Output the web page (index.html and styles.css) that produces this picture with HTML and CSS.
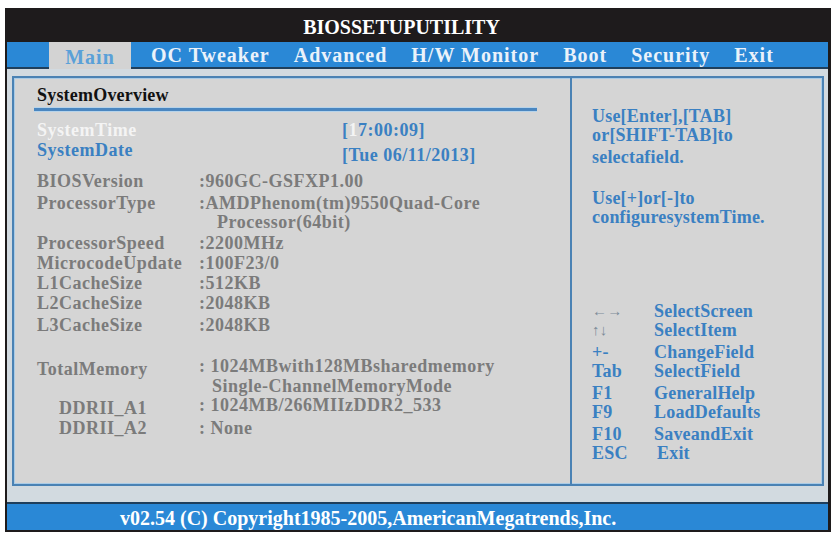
FILE: index.html
```html
<!DOCTYPE html>
<html lang="en">
<head>
    <meta charset="UTF-8">
    <title>BIOS Setup Utility</title>
    <link rel="stylesheet" href="styles.css">
</head>
<body>
    <div class="screen">
        <!-- Title bar -->
        <div class="title">BIOSSETUPUTILITY</div>

        <!-- Menu tabs -->
        <nav class="tabs">
            <span class="tab-stub"></span>
            <span class="tab active">Main</span>
            <span class="tab first">OC Tweaker</span>
            <span class="tab">Advanced</span>
            <span class="tab">H/W Monitor</span>
            <span class="tab">Boot</span>
            <span class="tab">Security</span>
            <span class="tab">Exit</span>
        </nav>

        <div class="body">
            <div class="panel">
                <!-- Left: system overview -->
                <section class="overview">
                    <h2 class="heading">SystemOverview</h2>
                    <div class="rule"></div>

                    <div class="row r-time">
                        <span class="label sel">SystemTime</span>
                        <span class="spacer"></span>
                        <span class="edit">[<span class="cursor">1</span>7:00:09]</span>
                    </div>
                    <div class="row r-date">
                        <span class="label edit">SystemDate</span>
                        <span class="spacer"></span>
                        <span class="edit down">[Tue 06/11/2013]</span>
                    </div>

                    <div class="row r-bios">
                        <span class="label">BIOSVersion</span>
                        <span class="value">:960GC-GSFXP1.00</span>
                    </div>
                    <div class="row r-cpu">
                        <span class="label">ProcessorType</span>
                        <span class="value">:AMDPhenom(tm)9550Quad-Core<br><span class="cont">Processor(64bit)</span></span>
                    </div>
                    <div class="row r-speed">
                        <span class="label">ProcessorSpeed</span>
                        <span class="value">:2200MHz</span>
                    </div>
                    <div class="row">
                        <span class="label">MicrocodeUpdate</span>
                        <span class="value">:100F23/0</span>
                    </div>
                    <div class="row r-l1">
                        <span class="label">L1CacheSize</span>
                        <span class="value">:512KB</span>
                    </div>
                    <div class="row">
                        <span class="label">L2CacheSize</span>
                        <span class="value">:2048KB</span>
                    </div>
                    <div class="row r-l3">
                        <span class="label">L3CacheSize</span>
                        <span class="value">:2048KB</span>
                    </div>

                    <div class="row r-mem">
                        <span class="label lower">TotalMemory</span>
                        <span class="value">: 1024MBwith128MBsharedmemory<br><span class="cont2">Single-ChannelMemoryMode</span></span>
                    </div>
                    <div class="row r-dimm">
                        <span class="label indent lower">DDRII_A1</span>
                        <span class="value">: 1024MB/266MIIzDDR2_533</span>
                    </div>
                    <div class="row r-dimm2">
                        <span class="label indent">DDRII_A2</span>
                        <span class="value">: None</span>
                    </div>
                </section>

                <!-- Right: help and key legend -->
                <aside class="help">
                    <p class="hint">Use[Enter],[TAB]<br>or[SHIFT-TAB]to<br><span class="gap">selectafield.</span></p>
                    <p class="hint second">Use[+]or[-]to<br>configuresystemTime.</p>

                    <div class="keys">
                        <span class="key arrow">&larr;&rarr;</span><span class="act">SelectScreen</span>
                        <span class="key arrow">&uarr;&darr;</span><span class="act">SelectItem</span>
                        <span class="key k-gap">+-</span><span class="act k-gap">ChangeField</span>
                        <span class="key">Tab</span><span class="act">SelectField</span>
                        <span class="key k-gap">F1</span><span class="act k-gap">GeneralHelp</span>
                        <span class="key">F9</span><span class="act">LoadDefaults</span>
                        <span class="key k-gap">F10</span><span class="act k-gap">SaveandExit</span>
                        <span class="key">ESC</span><span class="act nudge">Exit</span>
                    </div>
                </aside>
            </div>
        </div>

        <footer class="footer">v02.54 (C) Copyright1985-2005,AmericanMegatrends,Inc.</footer>
    </div>
</body>
</html>
```

FILE: styles.css
```css
/* General Reset */
* {
    margin: 0;
    padding: 0;
    box-sizing: border-box;
}

body {
    background: #FFFFFF;
    font-family: "Liberation Serif", "Times New Roman", serif;
    font-weight: bold;
    padding: 8px 5px 2px 5px;
}

/* Outer frame */
.screen {
    width: 826px;
    height: 524px;
    border-left: 2px solid #1E1B1C;
    border-right: 3px solid #1E1B1C;
    border-bottom: 2px solid #1E1B1C;
    display: flex;
    flex-direction: column;
    background: #D2DAE0;
}

/* Title */
.title {
    height: 34px;
    background: #1E1B1C;
    color: #FFFFFF;
    font-size: 20px;
    text-align: center;
    line-height: 38px;
    padding-right: 32px;
}

/* Tabs */
.tabs {
    height: 27px;
    background: #2A88D6;
    border-bottom: 2px solid #1F3F5C;
    display: flex;
    align-items: stretch;
    color: #EAF2FA;
    font-size: 20px;
    letter-spacing: 1px;
    line-height: 26px;
}

.tab-stub {
    width: 42px;
}

.tab {
    padding: 0 12px;
}

.tab.first {
    margin-left: 8px;
}

.tab.active {
    width: 82px;
    padding: 0;
    text-align: center;
    background: #D3D3D3;
    color: #5AA0D8;
    margin-bottom: -2px;
    line-height: 30px;
}

/* Content area */
.body {
    flex: 1;
    padding: 7px 4px 16px 5px;
    border-bottom: 2px solid #1F3F5C;
}

.panel {
    height: 100%;
    border: 2px solid #4A82B4;
    box-shadow: inset 0 0 0 1px #A9CBE6;
    background: #D5D5D5;
    display: flex;
}

.overview {
    width: 558px;
    padding: 6px 0 0 23px;
    border-right: 2px solid #4A82B4;
    color: #7B7B7B;
    font-size: 18px;
    letter-spacing: 0.5px;
}

.heading {
    font-size: 18px;
    color: #111111;
    line-height: 22px;
    letter-spacing: 0.2px;
}

.rule {
    width: 503px;
    height: 5px;
    margin: 1px 0 0 -3px;
    border-top: 1px solid #B6D3EA;
    border-bottom: 1px solid #B6D3EA;
    background: #4A86C0;
}

.row {
    display: flex;
    line-height: 20px;
}

.label {
    width: 162px;
    flex-shrink: 0;
}

.label.indent {
    padding-left: 22px;
}

.label.lower {
    padding-top: 3px;
}

.spacer {
    width: 143px;
}

.sel {
    color: #F4F4F4;
}

.edit {
    color: #3A80C2;
}

.edit.down {
    padding-top: 5px;
}

.cursor {
    color: #F4F4F4;
}

.cont {
    padding-left: 18px;
}

.cont2 {
    padding-left: 13px;
}

.r-time { margin-top: 8px; }
.r-bios { margin-top: 6px; }
.r-cpu { margin-top: 3px; line-height: 19px; }
.r-speed { margin-top: 1px; }
.r-l3 { margin-top: 2px; }
.r-mem { margin-top: 21px; }
.r-dimm { line-height: 18px; }
.r-dimm2 { margin-top: 1px; }

/* Help column */
.help {
    flex: 1;
    padding: 29px 0 0 20px;
    color: #3A80C2;
    font-size: 18px;
    letter-spacing: 0.2px;
}

.hint {
    line-height: 19px;
}

.hint .gap {
    display: inline-block;
    margin-top: 3px;
}

.hint.second {
    margin-top: 22px;
}

.keys {
    margin-top: 75px;
    display: grid;
    grid-template-columns: 62px auto;
    line-height: 19px;
}

.key.arrow {
    color: #7D8C99;
    font-size: 15px;
}

.k-gap {
    margin-top: 3px;
}

.act.nudge {
    padding-left: 3px;
}

/* Footer */
.footer {
    height: 26px;
    background: #2A88D6;
    color: #FFFFFF;
    font-size: 20px;
    line-height: 28px;
    padding-left: 113px;
}
```
